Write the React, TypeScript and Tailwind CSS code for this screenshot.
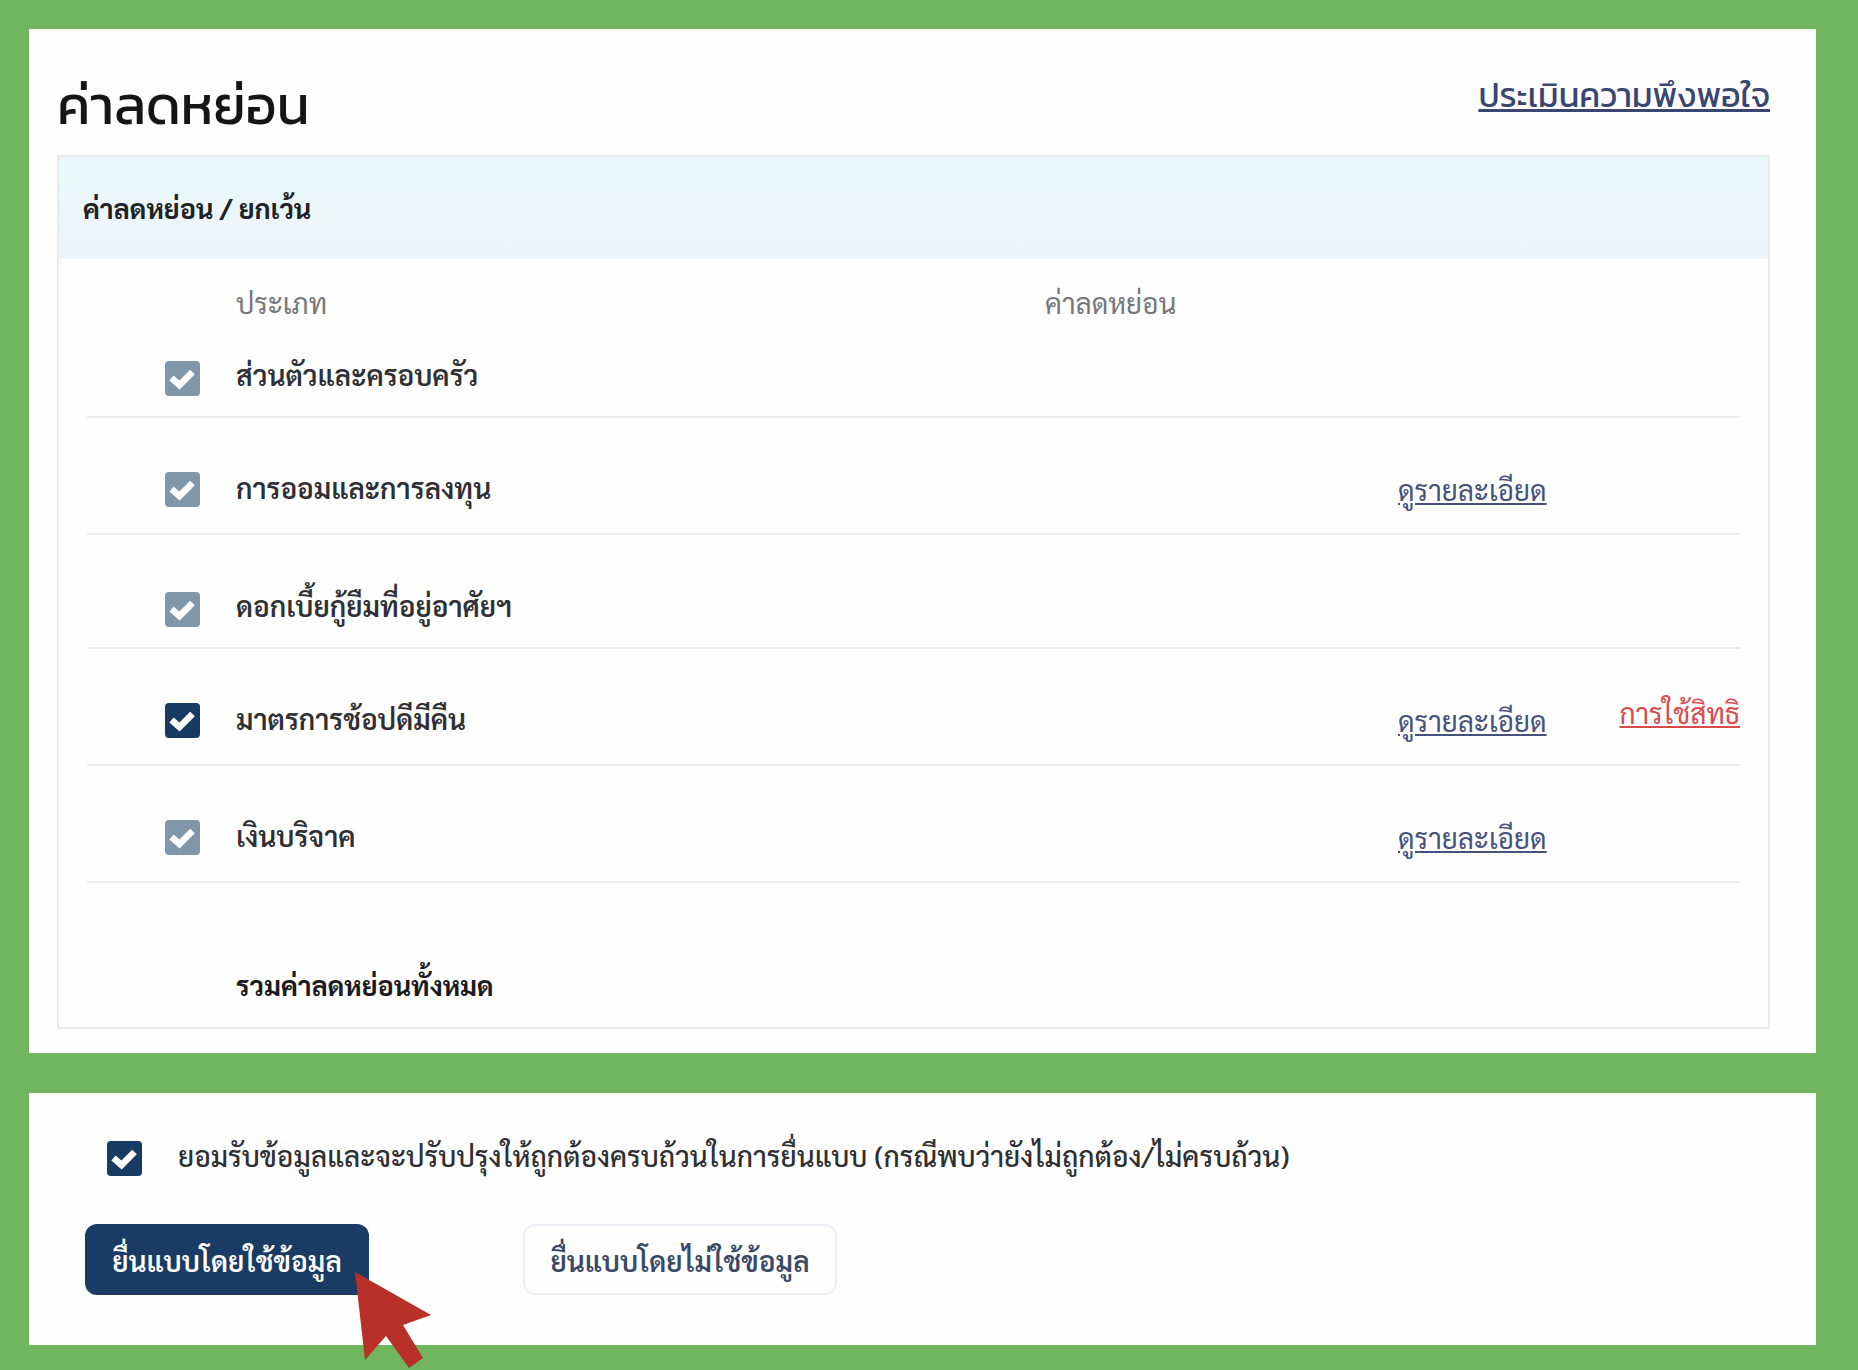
import clsx from "clsx";

type Deduction = {
  id: string;
  label: string;
  locked: boolean;
  detail: boolean;
  usage: boolean;
};

const deductions: Deduction[] = [
  { id: "family", label: "ส่วนตัวและครอบครัว", locked: true, detail: false, usage: false },
  { id: "saving", label: "การออมและการลงทุน", locked: true, detail: true, usage: false },
  { id: "loan", label: "ดอกเบี้ยกู้ยืมที่อยู่อาศัยฯ", locked: true, detail: false, usage: false },
  { id: "shopping", label: "มาตรการช้อปดีมีคืน", locked: false, detail: true, usage: true },
  { id: "donation", label: "เงินบริจาค", locked: true, detail: true, usage: false },
];

const CheckBox = ({ id, locked = false }: { id: string; locked?: boolean }) => {
  return (
    <span className="grid h-[35px] w-[35px] shrink-0">
      <input
        id={id}
        type="checkbox"
        defaultChecked
        disabled={locked}
        className={clsx(
          "col-start-1 row-start-1 h-full w-full appearance-none rounded-[4px]",
          locked ? "bg-[#8097ab]" : "bg-[#183b63]",
        )}
      />
      <svg
        viewBox="0 0 35 35"
        className="pointer-events-none col-start-1 row-start-1 h-full w-full"
        fill="none"
        stroke="#fff"
        strokeWidth="6.5"
      >
        <path d="M6.5 17 L14.5 24 L27.5 11" />
      </svg>
    </span>
  );
};

const App = () => {
  return (
    <div className="min-h-screen bg-[#6fb65f] py-[29px] pr-[42px] pl-[29px] font-['Sarabun','Noto_Sans_Thai_Looped','Noto_Sans',sans-serif] text-[28px] leading-8 text-[#2f3034]">
      <main className="flex flex-col gap-10">
        <section className="bg-[#fefefe] px-7 pb-6">
          <div className="flex h-[126px] items-start justify-between pt-11 font-['Kanit','Prompt','Noto_Sans_Thai','Noto_Sans',sans-serif]">
            <h1 className="text-[54px] leading-[64px] text-[#151515]">ค่าลดหย่อน</h1>
            <a href="#survey" className="mr-[18px] text-[34px] leading-[44px] text-[#3a4672] underline">
              ประเมินความพึงพอใจ
            </a>
          </div>

          <div className="mr-[18px] border-2 border-[#e9e8ec]">
            <h2 className="flex h-[102px] items-center bg-linear-to-b from-[#e9f9f9] to-[#eef4f8] px-6 text-[27px] font-bold text-[#1d2326]">
              ค่าลดหย่อน / ยกเว้น
            </h2>

            <div className="px-7">
              <table className="w-full table-fixed border-collapse text-left">
                <colgroup>
                  <col className="w-[149px]" />
                  <col />
                  <col className="w-[353px]" />
                  <col className="w-[171px]" />
                  <col className="w-[171px]" />
                </colgroup>
                <thead>
                  <tr className="h-[86px] text-[#77777a]">
                    <td />
                    <th className="font-normal">ประเภท</th>
                    <th className="font-normal">ค่าลดหย่อน</th>
                    <td />
                    <td />
                  </tr>
                </thead>
                <tbody>
                  {deductions.map((item, index) => (
                    <tr
                      key={item.id}
                      className={clsx(
                        "border-b-2 border-[#ecebf0] align-bottom",
                        index === 0 ? "h-[72px]" : item.detail ? "h-[117px]" : "h-[114px]",
                      )}
                    >
                      <td className={clsx("pl-[78px]", item.detail ? "pb-[26px]" : "pb-5")}>
                        <CheckBox id={item.id} locked={item.locked} />
                      </td>
                      <td className={clsx("font-semibold", item.detail ? "pb-[30px]" : "pb-[26px]")}>
                        <label htmlFor={item.id}>{item.label}</label>
                      </td>
                      <td />
                      <td className="pb-7">
                        {item.detail && (
                          <a href={`#${item.id}`} className="text-[#47527c] underline">
                            ดูรายละเอียด
                          </a>
                        )}
                      </td>
                      <td className="pb-9 text-right">
                        {item.usage && (
                          <a href="#usage" className="text-[#d94b4f] underline">
                            การใช้สิทธิ
                          </a>
                        )}
                      </td>
                    </tr>
                  ))}
                </tbody>
                <tfoot>
                  <tr className="h-[145px] align-bottom">
                    <td />
                    <th colSpan={4} className="pb-[26px] text-[27px] font-bold text-[#1b1b1d]">
                      รวมค่าลดหย่อนทั้งหมด
                    </th>
                  </tr>
                </tfoot>
              </table>
            </div>
          </div>
        </section>

        <section className="bg-[#fefefe] px-14 pt-12 pb-[50px]">
          <div className="flex h-[35px] items-center gap-9 pl-[22px]">
            <CheckBox id="accept" />
            <label htmlFor="accept" className="pb-2 font-medium">
              ยอมรับข้อมูลและจะปรับปรุงให้ถูกต้องครบถ้วนในการยื่นแบบ (กรณีพบว่ายังไม่ถูกต้อง/ไม่ครบถ้วน)
            </label>
          </div>

          <div className="mt-12 flex gap-[154px]">
            <div className="relative">
              <button type="button" className="h-[71px] w-[284px] rounded-xl bg-[#1a3b64] font-semibold text-white">
                ยื่นแบบโดยใช้ข้อมูล
              </button>
              <svg
                viewBox="0 0 76 96"
                className="pointer-events-none absolute top-12 left-[270px] h-24 w-[76px]"
                fill="#b93028"
              >
                <path d="M0 0 L76 43 L48 53 L68 86 L54 96 L31 64 L10 88 Z" />
              </svg>
            </div>
            <button
              type="button"
              className="h-[71px] w-[314px] rounded-xl border-2 border-[#eeecf4] bg-[#fefefe] font-semibold text-[#3a4a66]"
            >
              ยื่นแบบโดยไม่ใช้ข้อมูล
            </button>
          </div>
        </section>
      </main>
    </div>
  );
};

export default App;
